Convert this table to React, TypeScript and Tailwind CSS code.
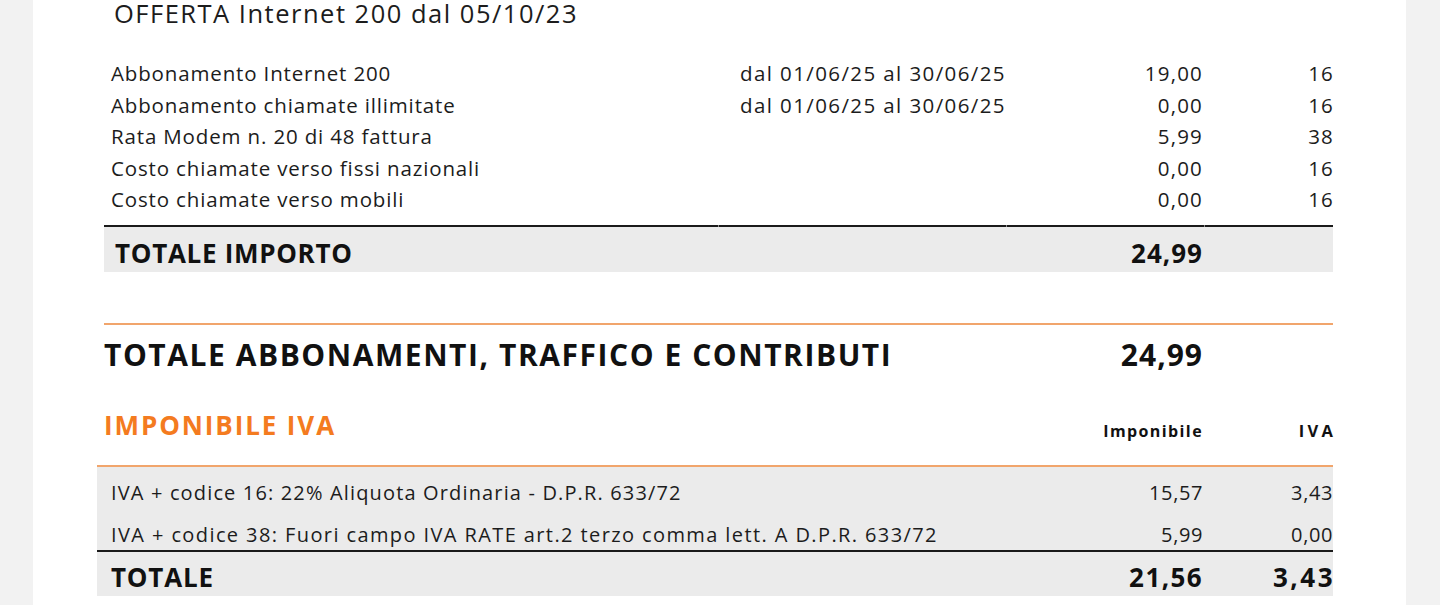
import React from "react";

const items = [
  { d: "Abbonamento Internet 200", p: "dal 01/06/25 al 30/06/25", a: "19,00", c: "16" },
  { d: "Abbonamento chiamate illimitate", p: "dal 01/06/25 al 30/06/25", a: "0,00", c: "16" },
  { d: "Rata Modem n. 20 di 48 fattura", p: "", a: "5,99", c: "38" },
  { d: "Costo chiamate verso fissi nazionali", p: "", a: "0,00", c: "16" },
  { d: "Costo chiamate verso mobili", p: "", a: "0,00", c: "16" },
];

const cols = "grid grid-cols-[614px_288px_198px_129px]";
const ivaCols = "grid grid-cols-[809px_298px_129px]";

export default function App() {
  return (
    <div
      className="w-full h-[605px] bg-[#f2f2f2] flex overflow-hidden text-[#1c1c1c]"
      style={{ fontFamily: '"Open Sans", "Noto Sans", sans-serif' }}
    >
      <div className="ml-[33px] w-[1373px] h-full bg-white pl-[71px]">
        <div className="w-[1229px]">
          {/* title */}
          <div className="pl-[10px] h-[27px] leading-[27px] text-[25.5px] tracking-[1.5px] whitespace-nowrap">
            OFFERTA Internet 200 dal 05/10/23
          </div>

          {/* items */}
          <div className="mt-[31px]">
            {items.map((it) => (
              <div key={it.d} className={`${cols} h-[31.5px] leading-[31.5px] text-[20.5px] whitespace-nowrap`}>
                <div className="pl-[7px] tracking-[0.85px]">{it.d}</div>
                <div className="pl-[22px] tracking-[1.4px]">{it.p}</div>
                <div className="text-right pr-[1px] tracking-[1.2px]">{it.a}</div>
                <div className="text-right -mr-[1px] tracking-[1.2px]">{it.c}</div>
              </div>
            ))}
          </div>

          {/* black rule with faint cell joints */}
          <div className="mt-[9.5px] grid grid-cols-[614px_1px_287px_1px_197px_1px_128px] h-[2px]">
            <div className="bg-[#1a1a1a]" />
            <div className="bg-[#8a8a8a]" />
            <div className="bg-[#1a1a1a]" />
            <div className="bg-[#8a8a8a]" />
            <div className="bg-[#1a1a1a]" />
            <div className="bg-[#8a8a8a]" />
            <div className="bg-[#1a1a1a]" />
          </div>
          <div className={`${cols} h-[45px] pt-[11px] leading-[30px] bg-[#ebebeb] font-bold text-[26px] text-[#111] whitespace-nowrap`}>
            <div className="pl-[11px] tracking-[0.7px]">TOTALE IMPORTO</div>
            <div />
            <div className="text-right pr-[1px] tracking-[1px]">24,99</div>
            <div />
          </div>

          {/* orange rule */}
          <div className="mt-[51px] h-[2px] bg-[#f1a56c]" />
          <div className={`${cols} h-[58px] items-center font-bold text-[30px] text-[#111] whitespace-nowrap`}>
            <div className="col-span-2 tracking-[1.55px]">TOTALE ABBONAMENTI, TRAFFICO E CONTRIBUTI</div>
            <div className="text-right pr-[1px] tracking-[1px]">24,99</div>
            <div />
          </div>

          {/* imponibile iva header */}
          <div className={`${cols} h-[82px] whitespace-nowrap`}>
            <div className="col-span-2 pt-[27px] text-[#f47b20] font-bold text-[26px] leading-[30px] tracking-[1.9px]">
              IMPONIBILE IVA
            </div>
            <div className="text-right pr-[1px] pt-[40px] font-bold text-[16px] leading-[16px] tracking-[1.4px] text-[#111]">
              Imponibile
            </div>
            <div className="text-right -mr-[3px] pt-[40px] font-bold text-[16.5px] leading-[16px] tracking-[3.2px] text-[#111]">
              IVA
            </div>
          </div>
        </div>

        <div className="-ml-[7px] w-[1236px]">
          <div className="h-[2px] bg-[#f1a56c]" />
          <div className="bg-[#ebebeb] whitespace-nowrap">
            <div className={`${ivaCols} h-[42px] pt-[15px] leading-[22px] text-[20px]`}>
              <div className="pl-[14px] tracking-[1.15px]">IVA + codice 16: 22% Aliquota Ordinaria - D.P.R. 633/72</div>
              <div className="text-right pr-[1px] tracking-[0.6px]">15,57</div>
              <div className="text-right tracking-[0.6px]">3,43</div>
            </div>
            <div className={`${ivaCols} h-[41px] pt-[15px] leading-[22px] text-[20px]`}>
              <div className="pl-[14px] tracking-[1.4px]">
                IVA + codice 38: Fuori campo IVA RATE art.2 terzo comma lett. A D.P.R. 633/72
              </div>
              <div className="text-right pr-[1px] tracking-[0.6px]">5,99</div>
              <div className="text-right tracking-[0.6px]">0,00</div>
            </div>
            <div className="h-[2px] bg-[#1a1a1a]" />
            <div className={`${ivaCols} h-[44px] pt-[10px] leading-[30px] font-bold text-[26px] text-[#111]`}>
              <div className="pl-[14px] tracking-[0.8px]">TOTALE</div>
              <div className="text-right pr-[1px] tracking-[1.4px]">21,56</div>
              <div className="text-right -mr-[2px] tracking-[2.5px]">3,43</div>
            </div>
          </div>
        </div>
      </div>
    </div>
  );
}
